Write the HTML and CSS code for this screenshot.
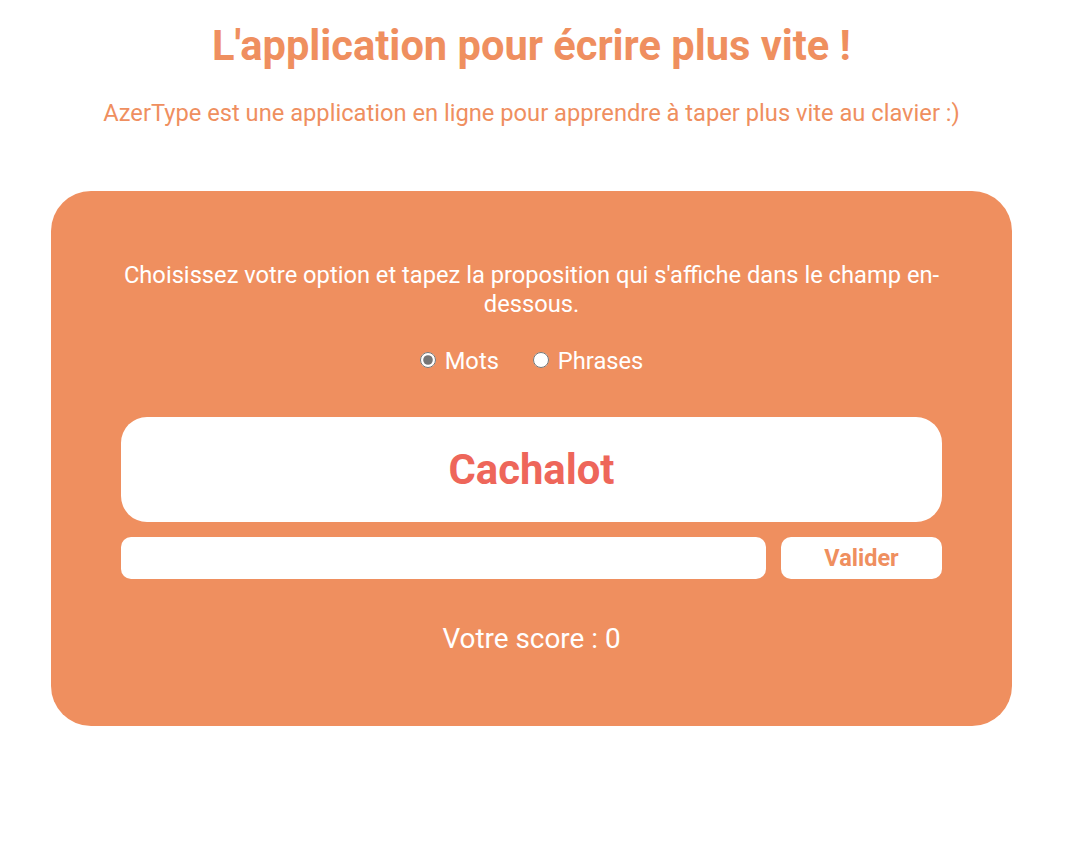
FILE: index.html
```html
<!DOCTYPE html>
<html lang="fr">
<head>
<meta charset="utf-8">
<title>AzerType</title>
<link rel="stylesheet" href="styles.css">
</head>
<body>
<header class="header">
  <h1 class="title">L'application pour écrire plus vite !</h1>
  <p class="subtitle">AzerType est une application en ligne pour apprendre à taper plus vite au clavier :)</p>
</header>
<main class="card">
  <p class="instructions">Choisissez votre option et tapez la proposition qui s'affiche dans le champ en-dessous.</p>
  <div class="options">
    <label class="option"><input type="radio" name="mode" checked> Mots</label>
    <label class="option"><input type="radio" name="mode"> Phrases</label>
  </div>
  <div class="word">Cachalot</div>
  <div class="answer">
    <input class="answer-input" type="text">
    <button class="answer-button">Valider</button>
  </div>
  <p class="score">Votre score : 0</p>
</main>
</body>
</html>
```

FILE: styles.css
```css
body {
  margin: 8px;
  padding-right: 4px;
  font-family: Roboto, "Liberation Sans", sans-serif;
  background: #ffffff;
}

.header {
  text-align: center;
  color: #ef8f5f;
}

.title {
  margin: 14px 0 0;
  font-size: 41.6px;
  line-height: 48px;
  font-weight: 700;
}

.subtitle {
  margin: 30px 0 0;
  font-size: 23.7px;
  line-height: 26px;
}

.card {
  width: 961px;
  box-sizing: border-box;
  margin: 65px auto 0;
  padding: 70px 70px 72px;
  background: #ef8f5f;
  border-radius: 40px;
  color: #ffffff;
  text-align: center;
}

.instructions {
  margin: 0;
  font-size: 23.7px;
  line-height: 29px;
}

.options {
  margin-top: 29px;
  display: flex;
  justify-content: center;
  gap: 34px;
  font-size: 23.7px;
  line-height: 26px;
}

.option {
  display: flex;
  align-items: center;
  gap: 9px;
}

.option input {
  margin: 0 0 3px;
  width: 16px;
  height: 16px;
  accent-color: #767676;
}

.word {
  margin-top: 43px;
  height: 105px;
  display: flex;
  align-items: center;
  justify-content: center;
  background: #ffffff;
  border-radius: 26px;
  color: #ee665a;
  font-size: 41.8px;
  font-weight: 700;
}

.answer {
  margin-top: 15px;
  display: flex;
  gap: 15px;
  height: 42px;
}

.answer-input {
  flex: 1;
  border: none;
  border-radius: 10px;
  background: #ffffff;
  margin: 0;
  padding: 0 10px;
  font-size: 20px;
  outline: none;
}

.answer-button {
  width: 161px;
  border: none;
  border-radius: 10px;
  background: #ffffff;
  color: #ef8f5f;
  font-family: Roboto, "Liberation Sans", sans-serif;
  font-size: 23.5px;
  font-weight: 700;
  padding: 0;
}

.score {
  margin: 45px 0 0;
  font-size: 27.9px;
  line-height: 30px;
}
```
